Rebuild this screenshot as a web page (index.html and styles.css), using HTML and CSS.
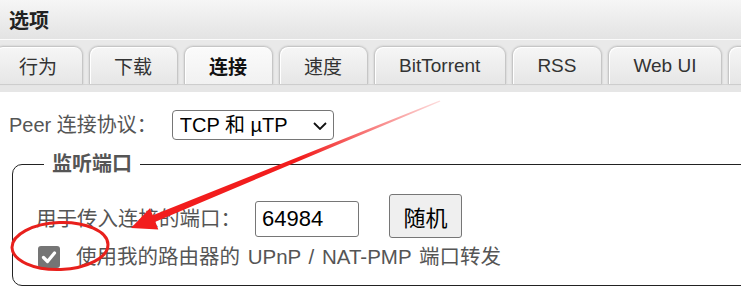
FILE: index.html
```html
<!DOCTYPE html>
<html lang="zh-CN">
<head>
<meta charset="utf-8">
<title>选项</title>
<link rel="stylesheet" href="styles.css">
</head>
<body>
<div class="window">
  <div class="titlebar">选项</div>
  <div class="tabstrip">
    <ul class="tabs">
      <li class="tab">行为</li>
      <li class="tab">下载</li>
      <li class="tab active">连接</li>
      <li class="tab">速度</li>
      <li class="tab">BitTorrent</li>
      <li class="tab">RSS</li>
      <li class="tab">Web UI</li>
      <li class="tab tab-more" aria-label="高级"></li>
    </ul>
    <div class="band"></div>
  </div>
  <div class="content">
    <div class="peer-row">
      <label class="label" for="proto">Peer 连接协议：</label>
      <div class="select-wrap">
        <select id="proto" class="select">
          <option>TCP 和 µTP</option>
          <option>TCP</option>
          <option>µTP</option>
        </select>
        <svg class="chevron" width="14" height="8" viewBox="0 0 14 8"><path d="M1 1 L7 7 L13 1" fill="none" stroke="#111" stroke-width="1.8"/></svg>
      </div>
    </div>
    <fieldset class="ports">
      <legend class="legend">监听端口</legend>
      <div class="port-row">
        <label class="label port-label" for="port">用于传入连接的端口：</label>
        <input id="port" class="input" type="text" value="64984">
        <button class="button" type="button">随机</button>
      </div>
      <div class="check-row">
        <span class="checkbox"><svg width="22" height="22" viewBox="0 0 22 22"><path d="M5.5 11.5 L9.5 15.5 L16.5 7" fill="none" stroke="#fff" stroke-width="3.2" stroke-linecap="round" stroke-linejoin="round"/></svg></span>
        <span class="label check-label">使用我的路由器的 UPnP / NAT-PMP 端口转发</span>
      </div>
    </fieldset>
  </div>
  <svg class="annot" width="741" height="293" viewBox="0 0 741 293">
    <defs>
      <linearGradient id="fade" gradientUnits="userSpaceOnUse" x1="440" y1="101" x2="300" y2="158">
        <stop offset="0" stop-color="#f21d1d" stop-opacity="0.15"/>
        <stop offset="1" stop-color="#f21d1d" stop-opacity="1"/>
      </linearGradient>
    </defs>
    <polygon points="439.6,100.6 440.4,101.4 155.4,221.7 158.3,229.5 131,228 149.9,208.3 152.8,215.3" fill="url(#fade)"/>
    <ellipse cx="60" cy="246" rx="48" ry="23.5" transform="rotate(-2 60 246)" fill="none" stroke="#e8201c" stroke-width="3"/>
  </svg>
</div>
</body>
</html>
```
FILE: styles.css
```css
html, body {
  margin: 0;
  padding: 0;
  background: #ffffff;
}
body {
  font-family: "Liberation Sans", "Noto Sans CJK SC", sans-serif;
  overflow: hidden;
}
.window {
  position: relative;
  width: 741px;
  height: 293px;
  overflow: hidden;
}
.titlebar {
  height: 40px;
  box-sizing: border-box;
  padding-left: 9px;
  display: flex;
  align-items: center;
  font-size: 20px;
  font-weight: bold;
  color: #222;
  background: linear-gradient(#f6f6f6, #e3e3e3);
  border-bottom: 1px solid #fbfbfb;
}
.tabstrip {
  background: #e9e9e9;
  padding-top: 6px;
}
.tabs {
  list-style: none;
  margin: 0 0 0 -6px;
  padding: 0;
  display: flex;
  gap: 6px;
  white-space: nowrap;
}
.tab {
  flex: none;
  height: 38px;
  box-sizing: border-box;
  padding: 0 24.5px;
  display: flex;
  align-items: center;
  font-size: 19px;
  color: #333;
  border-radius: 9px 9px 0 0;
  background: linear-gradient(#f6f6f6, #e6e6e6);
  border: 1px solid #c6c6c6;
  border-bottom: none;
  box-shadow: inset 1px 1px 0 #ffffff, 0 0 2px #b9b9b9;
}
.tab:first-child {
  padding-left: 24px;
}
.tab.active {
  font-weight: bold;
  color: #111;
  background: linear-gradient(#fbfbfb, #f1f1f1);
}
.tab-more {
  width: 90px;
}
.band {
  height: 8px;
  box-sizing: border-box;
  background: #e6e6e6;
  border-top: 1px solid #d4d4d4;
}
.content {
  padding: 18px 0 0 9px;
}
.label {
  font-size: 20px;
  color: #555;
  line-height: 26px;
}
.peer-row {
  display: flex;
  align-items: center;
  gap: 15px;
}
.select-wrap {
  position: relative;
  display: flex;
}
.select {
  -webkit-appearance: none;
  appearance: none;
  width: 162px;
  height: 30px;
  box-sizing: border-box;
  padding: 0 0 0 7px;
  border: 1px solid #767676;
  border-radius: 4px;
  background: #fff;
  color: #000;
  font-family: "Liberation Sans", "Noto Sans CJK SC", sans-serif;
  font-size: 20px;
  line-height: 28px;
}
.chevron {
  position: absolute;
  left: 141px;
  top: 12px;
  pointer-events: none;
}
.ports {
  margin: 11px 0 0 3px;
  width: 800px;
  box-sizing: border-box;
  border: 1px solid #222;
  border-radius: 10px;
  padding: 17px 0 15px 23px;
}
.legend {
  margin-left: 8px;
  padding: 0 8px;
  font-size: 20px;
  font-weight: bold;
  color: #555;
  line-height: 26px;
}
.port-row {
  display: flex;
  align-items: center;
  height: 44px;
}
.port-label {
  margin-top: 6px;
  font-size: 20.5px;
}
.input {
  margin-left: 14px;
  width: 104px;
  height: 36px;
  box-sizing: border-box;
  padding: 0 6px;
  border: 1px solid #767676;
  border-radius: 3px;
  font-family: "Liberation Sans", "Noto Sans CJK SC", sans-serif;
  font-size: 22px;
  color: #000;
  margin-top: 5px;
}
.button {
  margin-left: 30px;
  width: 73px;
  height: 44px;
  box-sizing: border-box;
  padding: 0;
  border: 1px solid #767676;
  border-radius: 3px;
  background: #efefef;
  font-family: "Liberation Sans", "Noto Sans CJK SC", sans-serif;
  font-size: 22px;
  color: #000;
}
.check-row {
  display: flex;
  align-items: center;
  gap: 16px;
  margin-top: 6px;
  padding-left: 2px;
  height: 26px;
}
.check-label {
  font-size: 20.5px;
  word-spacing: 2px;
}
.checkbox {
  width: 22px;
  height: 22px;
  border-radius: 3px;
  background: #757575;
  display: flex;
}
.annot {
  position: absolute;
  left: 0;
  top: 0;
  pointer-events: none;
}
```
